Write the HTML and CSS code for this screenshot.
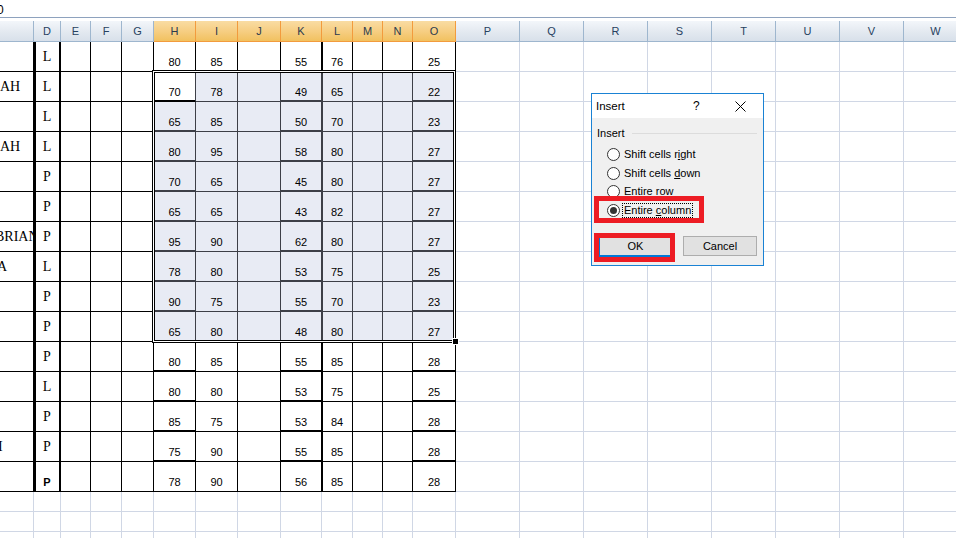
FILE: index.html
```html
<!DOCTYPE html>
<html>
<head>
<meta charset="utf-8">
<link rel="stylesheet" href="styles.css">
</head>
<body>
<div class="fbar"><span class="fval">0</span></div>
<div class="sheet">
  <div class="hrow">
    <div></div><div>D</div><div>E</div><div>F</div><div>G</div>
    <div class="hs">H</div><div class="hs">I</div><div class="hs">J</div><div class="hs">K</div><div class="hs">L</div><div class="hs">M</div><div class="hs">N</div><div class="hs">O</div>
    <div>P</div><div>Q</div><div>R</div><div>S</div><div>T</div><div>U</div><div>V</div><div>W</div>
  </div>

  <div class="row">
    <div class="c"></div><div class="d">L</div><div></div><div></div><div></div>
    <div class="n tb">80</div><div class="n">85</div><div></div><div class="n tb">55</div><div class="n tl">76</div><div></div><div></div><div class="n tb">25</div><div class="fill"></div>
  </div>
  <div class="row">
    <div class="c"><span class="ah">AH</span></div><div class="d">L</div><div></div><div></div><div></div>
    <div class="n s a tb">70</div><div class="n s">78</div><div class="s"></div><div class="n s tb">49</div><div class="n s tl">65</div><div class="s"></div><div class="s"></div><div class="n s tb">22</div><div class="fill"></div>
  </div>
  <div class="row">
    <div class="c"></div><div class="d">L</div><div></div><div></div><div></div>
    <div class="n s tb">65</div><div class="n s">85</div><div class="s"></div><div class="n s tb">50</div><div class="n s tl">70</div><div class="s"></div><div class="s"></div><div class="n s tb">23</div><div class="fill"></div>
  </div>
  <div class="row">
    <div class="c"><span class="ah">AH</span></div><div class="d">L</div><div></div><div></div><div></div>
    <div class="n s tb">80</div><div class="n s">95</div><div class="s"></div><div class="n s tb">58</div><div class="n s tl">80</div><div class="s"></div><div class="s"></div><div class="n s tb">27</div><div class="fill"></div>
  </div>
  <div class="row">
    <div class="c"></div><div class="d">P</div><div></div><div></div><div></div>
    <div class="n s tb">70</div><div class="n s">65</div><div class="s"></div><div class="n s tb">45</div><div class="n s tl">80</div><div class="s"></div><div class="s"></div><div class="n s tb">27</div><div class="fill"></div>
  </div>
  <div class="row">
    <div class="c"></div><div class="d">P</div><div></div><div></div><div></div>
    <div class="n s tb">65</div><div class="n s">65</div><div class="s"></div><div class="n s tb">43</div><div class="n s tl">82</div><div class="s"></div><div class="s"></div><div class="n s tb">27</div><div class="fill"></div>
  </div>
  <div class="row">
    <div class="c"><span class="brian">BRIAN</span></div><div class="d">P</div><div></div><div></div><div></div>
    <div class="n s tb">95</div><div class="n s">90</div><div class="s"></div><div class="n s tb">62</div><div class="n s tl">80</div><div class="s"></div><div class="s"></div><div class="n s tb">27</div><div class="fill"></div>
  </div>
  <div class="row">
    <div class="c"><span class="a1">A</span></div><div class="d">L</div><div></div><div></div><div></div>
    <div class="n s tb">78</div><div class="n s">80</div><div class="s"></div><div class="n s tb">53</div><div class="n s tl">75</div><div class="s"></div><div class="s"></div><div class="n s tb">25</div><div class="fill"></div>
  </div>
  <div class="row">
    <div class="c"></div><div class="d">P</div><div></div><div></div><div></div>
    <div class="n s tb">90</div><div class="n s">75</div><div class="s"></div><div class="n s tb">55</div><div class="n s tl">70</div><div class="s"></div><div class="s"></div><div class="n s tb">23</div><div class="fill"></div>
  </div>
  <div class="row">
    <div class="c"></div><div class="d">P</div><div></div><div></div><div></div>
    <div class="n s tb">65</div><div class="n s">80</div><div class="s"></div><div class="n s tb">48</div><div class="n s tl">80</div><div class="s"></div><div class="s"></div><div class="n s tb">27</div><div class="fill"></div>
  </div>
  <div class="row">
    <div class="c"></div><div class="d">P</div><div></div><div></div><div></div>
    <div class="n tb">80</div><div class="n">85</div><div></div><div class="n tb">55</div><div class="n tl">85</div><div></div><div></div><div class="n tb">28</div><div class="fill"></div>
  </div>
  <div class="row">
    <div class="c"></div><div class="d">L</div><div></div><div></div><div></div>
    <div class="n tb">80</div><div class="n">80</div><div></div><div class="n tb">53</div><div class="n tl">75</div><div></div><div></div><div class="n tb">25</div><div class="fill"></div>
  </div>
  <div class="row">
    <div class="c"></div><div class="d">P</div><div></div><div></div><div></div>
    <div class="n tb">85</div><div class="n">75</div><div></div><div class="n tb">53</div><div class="n tl">84</div><div></div><div></div><div class="n tb">28</div><div class="fill"></div>
  </div>
  <div class="row">
    <div class="c"><span class="i1">I</span></div><div class="d">P</div><div></div><div></div><div></div>
    <div class="n tb">75</div><div class="n">90</div><div></div><div class="n tb">55</div><div class="n tl">85</div><div></div><div></div><div class="n tb">28</div><div class="fill"></div>
  </div>
  <div class="row">
    <div class="c"></div><div class="d db">P</div><div></div><div></div><div></div>
    <div class="n">78</div><div class="n">90</div><div></div><div class="n">56</div><div class="n tl">85</div><div></div><div></div><div class="n">28</div><div class="fill"></div>
  </div>

  <div class="erow">
    <div></div><div></div><div></div><div></div><div></div><div></div><div></div><div></div><div></div><div></div><div></div><div></div><div></div><div class="fill"></div>
  </div>
  <div class="erow">
    <div></div><div></div><div></div><div></div><div></div><div></div><div></div><div></div><div></div><div></div><div></div><div></div><div></div><div class="fill"></div>
  </div>
  <div class="erow">
    <div></div><div></div><div></div><div></div><div></div><div></div><div></div><div></div><div></div><div></div><div></div><div></div><div></div><div class="fill"></div>
  </div>
</div>

<div class="selbox"></div>
<div class="handle"></div>

<div class="dlg">
  <div class="dlg-title">
    <span class="ttl">Insert</span>
    <span class="q">?</span>
    <svg class="x" width="11" height="11" viewBox="0 0 11 11"><path d="M0.5 0.5 L10.5 10.5 M10.5 0.5 L0.5 10.5" stroke="#000" stroke-width="1" fill="none"/></svg>
  </div>
  <div class="dlg-body">
    <div class="grp"><span>Insert</span><i class="rule"></i></div>
    <div class="opts">
      <div class="opt"><span class="radio"></span><span class="lbl">Shift cells r<u>i</u>ght</span></div>
      <div class="opt"><span class="radio"></span><span class="lbl">Shift cells <u>d</u>own</span></div>
      <div class="opt"><span class="radio"></span><span class="lbl">Entire <u>r</u>ow</span></div>
      <div class="opt"><span class="radio on"></span><span class="lbl focus">Entire <u>c</u>olumn</span></div>
    </div>
    <div class="btns">
      <div class="btn ok">OK</div>
      <div class="btn cancel">Cancel</div>
    </div>
  </div>
  <div class="hl hl-col"></div>
  <div class="hl hl-ok"></div>
</div>
</body>
</html>
```

FILE: styles.css
```css
html, body {
  margin: 0;
  padding: 0;
  background: #fff;
}
body {
  position: relative;
  width: 956px;
  height: 538px;
  overflow: hidden;
  font-family: "Liberation Sans", Arial, sans-serif;
  color: #000;
}

.fbar {
  box-sizing: border-box;
  height: 18px;
  border-bottom: 1px solid #8ea2be;
  margin-bottom: 3px;
  font-size: 12px;
  line-height: 14px;
  padding-top: 3px;
}
.fval { margin-left: -3px; }

.sheet { width: 968px; }

.hrow {
  display: grid;
  grid-template-columns: 34px 27px 30px 31px 32px 42px 42px 43px 41px 31px 30px 30px 43px repeat(8, 64px);
  height: 21px;
}
.hrow > div {
  box-sizing: border-box;
  border-right: 1px solid #9eb6ce;
  border-bottom: 1px solid #9eb6ce;
  background: linear-gradient(#f3f6fa, #e3e9f0 55%, #d8e0ea);
  color: #27415f;
  font-size: 11px;
  line-height: 20px;
  text-align: center;
}
.hrow > div.hs {
  background: linear-gradient(#f9dca3, #f6cd80 55%, #f1c15f);
  border-right-color: #f29b3d;
  border-bottom-color: #f29b3d;
  color: #2b3a4e;
}

.row, .erow {
  display: grid;
  grid-template-columns: 34px 27px 30px 31px 32px 42px 42px 43px 41px 31px 30px 30px 43px 512px;
}
.row { height: 30px; }
.erow { height: 20px; }

.row > div {
  box-sizing: border-box;
  border-right: 1px solid #000;
  border-bottom: 1px solid #000;
}
.erow > div {
  box-sizing: border-box;
  border-right: 1px solid #d0d7e5;
  border-bottom: 1px solid #d0d7e5;
}
.row > div.fill, .erow > div.fill {
  border-right: 0;
  border-bottom: 1px solid #d0d7e5;
  background: repeating-linear-gradient(90deg, transparent 0 63px, #d0d7e5 63px 64px);
}

.c {
  display: flex;
  align-items: center;
  overflow: hidden;
  white-space: nowrap;
  font-family: "Liberation Serif", "Times New Roman", serif;
  font-size: 14px;
  padding-top: 1px;
}
.ah { margin-left: 0; }
.brian { margin-left: -5px; }
.a1 { margin-left: -3px; }
.i1 { margin-left: -2px; }

.row > div.d {
  display: flex;
  align-items: center;
  justify-content: center;
  font-family: "Liberation Serif", "Times New Roman", serif;
  font-size: 14px;
  padding-top: 1px;
  box-shadow: inset 2px 0 0 #000, inset -1px 0 0 #000;
}
.row > div.d.db {
  font-family: "Liberation Sans", Arial, sans-serif;
  font-weight: bold;
  font-size: 11px;
  align-items: flex-end;
  padding-bottom: 3px;
}

.n {
  display: flex;
  align-items: flex-end;
  justify-content: center;
  font-size: 11px;
  line-height: 13px;
  padding-bottom: 2px;
}

.row > div.tb { box-shadow: inset 0 -1px 0 #000; }
.row > div.tl { box-shadow: inset 1px 0 0 #000; }

.row > div.s {
  background: #e8ebf4;
  border-color: #3d3f47;
}
.row > div.s.tb { box-shadow: inset 0 -1px 0 #3d3f47; }
.row > div.s.tl { box-shadow: inset 1px 0 0 #3d3f47; }
.row > div.s.a { background: #fff; border-bottom-color: #000; }
.row > div.s.a.tb { box-shadow: inset 0 -1px 0 #000; }

.selbox {
  position: absolute;
  left: 152px;
  top: 70px;
  width: 304px;
  height: 273px;
  box-sizing: border-box;
  border: 1px solid #000;
  box-shadow: inset 0 0 0 1px #fff, inset 0 0 0 2px #000;
}
.handle {
  position: absolute;
  left: 452px;
  top: 338px;
  width: 5px;
  height: 5px;
  background: #000;
  border: 1px solid #fff;
}

/* dialog */
.dlg {
  position: absolute;
  left: 591px;
  top: 93px;
  width: 173px;
  height: 173px;
  box-sizing: border-box;
  border: 1px solid #1a82d4;
  background: #f0f0f0;
  font-family: "Liberation Sans", Arial, sans-serif;
  font-size: 11px;
  color: #000;
}
.dlg-title {
  position: relative;
  height: 24px;
  background: #fff;
  display: flex;
  align-items: center;
  padding-left: 4px;
}
.ttl { font-size: 11.5px; }
.q {
  position: absolute;
  left: 101px;
  top: 5px;
  font-size: 12px;
}
.x {
  position: absolute;
  left: 143px;
  top: 7px;
}
.dlg-body {
  padding: 8px 6px 0 5px;
}
.grp {
  display: flex;
  align-items: center;
  height: 14px;
  line-height: 14px;
}
.grp .rule {
  flex: 1;
  height: 1px;
  background: #dcdcdc;
  margin-left: 7px;
}
.opts {
  margin-top: 5px;
  padding-left: 10px;
}
.opt {
  height: 18.7px;
  display: flex;
  align-items: center;
}
.radio {
  box-sizing: border-box;
  width: 13px;
  height: 13px;
  border: 1px solid #333;
  border-radius: 50%;
  background: #fff;
  position: relative;
}
.radio.on::after {
  content: "";
  position: absolute;
  left: 2px;
  top: 2px;
  width: 7px;
  height: 7px;
  border-radius: 50%;
  background: #333;
}
.lbl {
  margin-left: 2px;
  padding: 0 1px;
  line-height: 13px;
  border: 1px solid transparent;
}
.lbl.focus { border: 1px dotted #000; }
.btns {
  display: flex;
  margin-top: 16px;
  padding-left: 1px;
}
.btn {
  box-sizing: border-box;
  height: 20px;
  background: #e1e1e1;
  border: 1px solid #adadad;
  display: flex;
  align-items: center;
  justify-content: center;
  font-size: 11px;
}
.btn.ok {
  width: 75px;
  height: 21px;
  border: 2px solid #0078d7;
}
.btn.cancel {
  width: 74px;
  margin-left: 10px;
}
.hl {
  position: absolute;
  box-sizing: border-box;
  border: 5px solid #ed1c24;
}
.hl-col {
  left: 2px;
  top: 102px;
  width: 110px;
  height: 27px;
}
.hl-ok {
  left: 2px;
  top: 139px;
  width: 81px;
  height: 29px;
}
```
